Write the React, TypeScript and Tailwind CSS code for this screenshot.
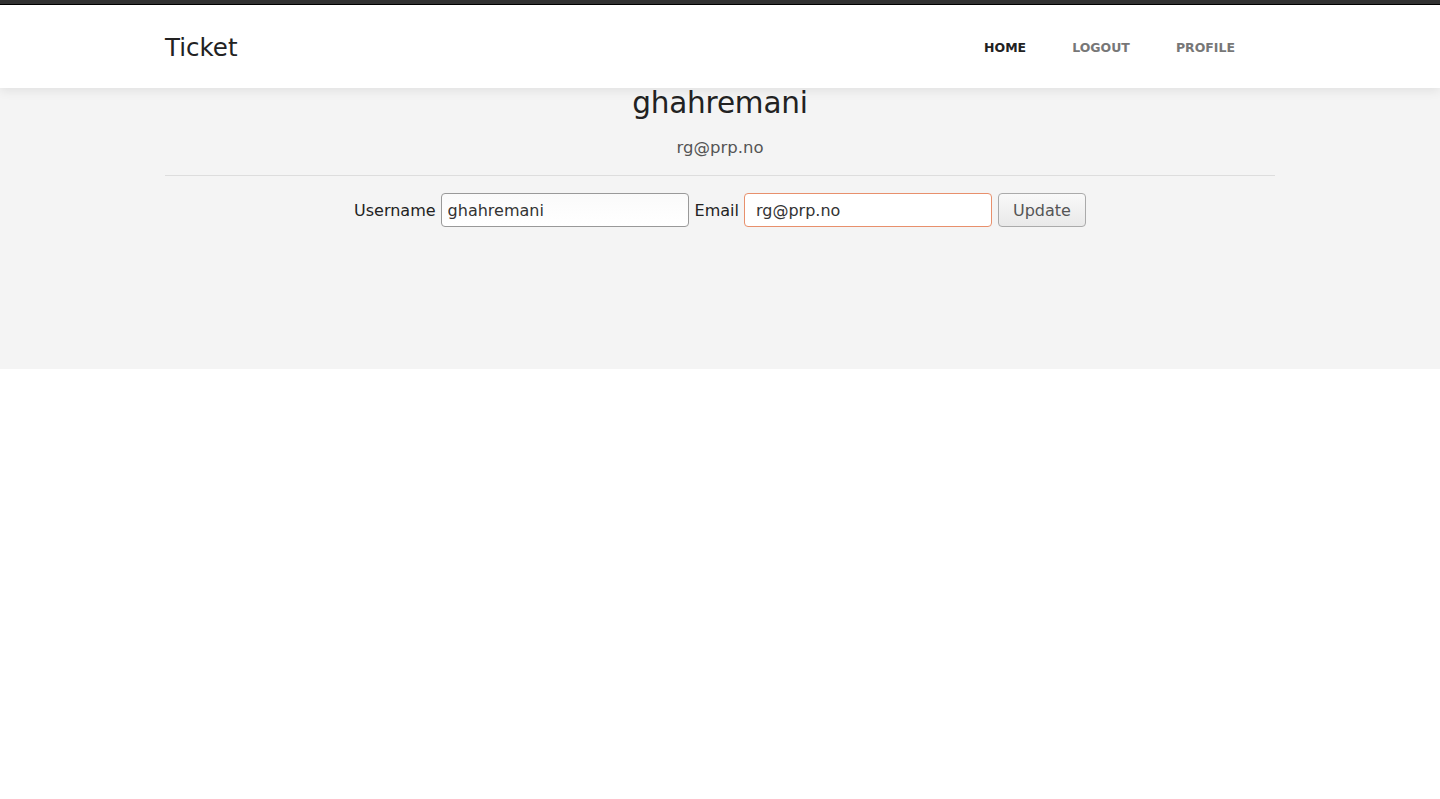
import React from 'react';

const NAV_ITEMS = [
  { name: 'HOME', active: true },
  { name: 'LOGOUT', active: false },
  { name: 'PROFILE', active: false },
];

export default function App() {
  return (
    <div className="min-h-screen bg-white font-['DejaVu_Sans',sans-serif] text-[#222]">
      <div className="h-[4px] bg-[#333]" />
      <div className="h-px bg-black" />
      <nav className="relative z-10 bg-white shadow-[0_3px_10px_rgba(0,0,0,0.08)]">
        <div className="mx-auto flex h-[83px] w-[1110px] items-center justify-between pt-[3px]">
          <a className="text-[24.5px] text-[#222]">Ticket</a>
          <ul className="mr-[40px] flex gap-[46px] pt-px">
            {NAV_ITEMS.map((item) => (
              <li
                key={item.name}
                className={`text-[12.5px] font-bold ${item.active ? 'text-[#222]' : 'text-[#777]'}`}
              >
                {item.name}
              </li>
            ))}
          </ul>
        </div>
      </nav>
      <main className="h-[281px] bg-[#f4f4f4]">
        <div className="mx-auto w-[1110px] text-center">
          <h1 className="text-[29.5px] leading-[30px] tracking-[-0.2px]">ghahremani</h1>
          <p className="mt-[20px] text-[16.5px] leading-[20px] text-[#555]">rg@prp.no</p>
          <hr className="mt-[17px] border-[#ddd]" />
          <form className="mt-[17px] flex items-center justify-center text-[16px]">
            <label className="mr-[5px] pt-[2px]">Username</label>
            <input
              defaultValue="ghahremani"
              className="h-[34px] w-[248px] rounded-[4px] border border-[#999] bg-gradient-to-b from-[#fafafa] to-white pl-[6px] pt-px text-[#333] outline-none"
            />
            <label className="ml-[6px] mr-[5px] pt-[2px]">Email</label>
            <input
              defaultValue="rg@prp.no"
              className="h-[34px] w-[248px] rounded-[4px] border border-[#e8906c] bg-white pl-[11px] pt-px text-[#333] outline-none"
            />
            <button
              type="button"
              className="ml-[6px] h-[34px] w-[88px] rounded-[4px] border border-[#aaa] bg-gradient-to-b from-[#f9f9f9] to-[#e9e9e9] pt-px text-[#555]"
            >
              Update
            </button>
          </form>
        </div>
      </main>
    </div>
  );
}
